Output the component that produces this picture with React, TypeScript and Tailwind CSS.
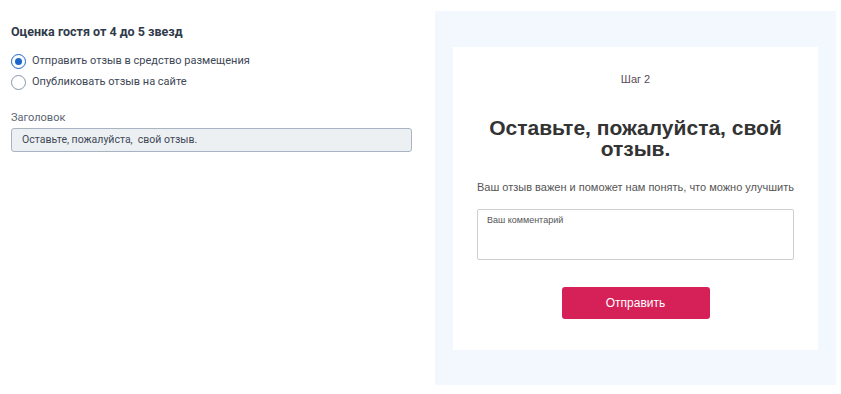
import React from "react";

export default function App() {
  return (
    <div className="flex w-[841px] h-[394px] bg-white">
      <div className="w-[435px] pl-[11px] pt-[24px]" style={{ fontFamily: "Roboto, sans-serif" }}>
        <div className="text-[12.5px] font-bold text-[#2f3a4a] leading-[16px]">Оценка гостя от 4 до 5 звезд</div>
        <div className="mt-[14px] flex flex-col gap-[6px]">
          <label className="flex items-center gap-[6px] h-[15px]">
            <span className="w-[15px] h-[15px] rounded-full border border-[#1a66c9] flex items-center justify-center bg-white">
              <span className="w-[7px] h-[7px] rounded-full bg-[#1a66c9]" />
            </span>
            <span className="text-[11px] text-[#3d4756]">Отправить отзыв в средство размещения</span>
          </label>
          <label className="flex items-center gap-[6px] h-[15px]">
            <span className="w-[15px] h-[15px] rounded-full border border-[#8a96a8] bg-white" />
            <span className="text-[11px] text-[#3d4756]">Опубликовать отзыв на сайте</span>
          </label>
        </div>
        <div className="mt-[21px] text-[11px] text-[#5a6472] leading-[14px]">Заголовок</div>
        <div className="mt-[3px] w-[401px] h-[24px] rounded-[3px] border border-[#a9b4c3] bg-[#edf0f3] flex items-center pl-[10px] text-[10.5px] text-[#3d4756]">
          Оставьте, пожалуйста,&nbsp; свой отзыв.
        </div>
      </div>
      <div className="mt-[11px] w-[401px] h-[374px] bg-[#f3f7fe] pt-[36px] px-[18px]" style={{ fontFamily: "'Liberation Sans', Arial, sans-serif" }}>
        <div className="w-[365px] h-[303px] bg-white flex flex-col items-center">
          <div className="mt-[26px] text-[11px] text-[#5a4a5a] leading-[13px]">Шаг 2</div>
          <div className="mt-[31px] text-[21px] font-bold text-[#333333] leading-[21px] text-center w-[310px]">
            Оставьте, пожалуйста, свой отзыв.
          </div>
          <div className="mt-[22px] text-[11px] text-[#555555] leading-[13px] self-start pl-[24px]">
            Ваш отзыв важен и поможет нам понять, что можно улучшить
          </div>
          <div className="mt-[15px] w-[317px] h-[51px] border border-[#cfcfcf] rounded-[2px] pl-[9px] pt-[4px] text-[9px] text-[#555555] self-start ml-[24px]">
            Ваш комментарий
          </div>
          <button className="mt-[27px] w-[148px] h-[32px] rounded-[3px] bg-[#d62058] text-white text-[12px]">
            Отправить
          </button>
        </div>
      </div>
    </div>
  );
}
